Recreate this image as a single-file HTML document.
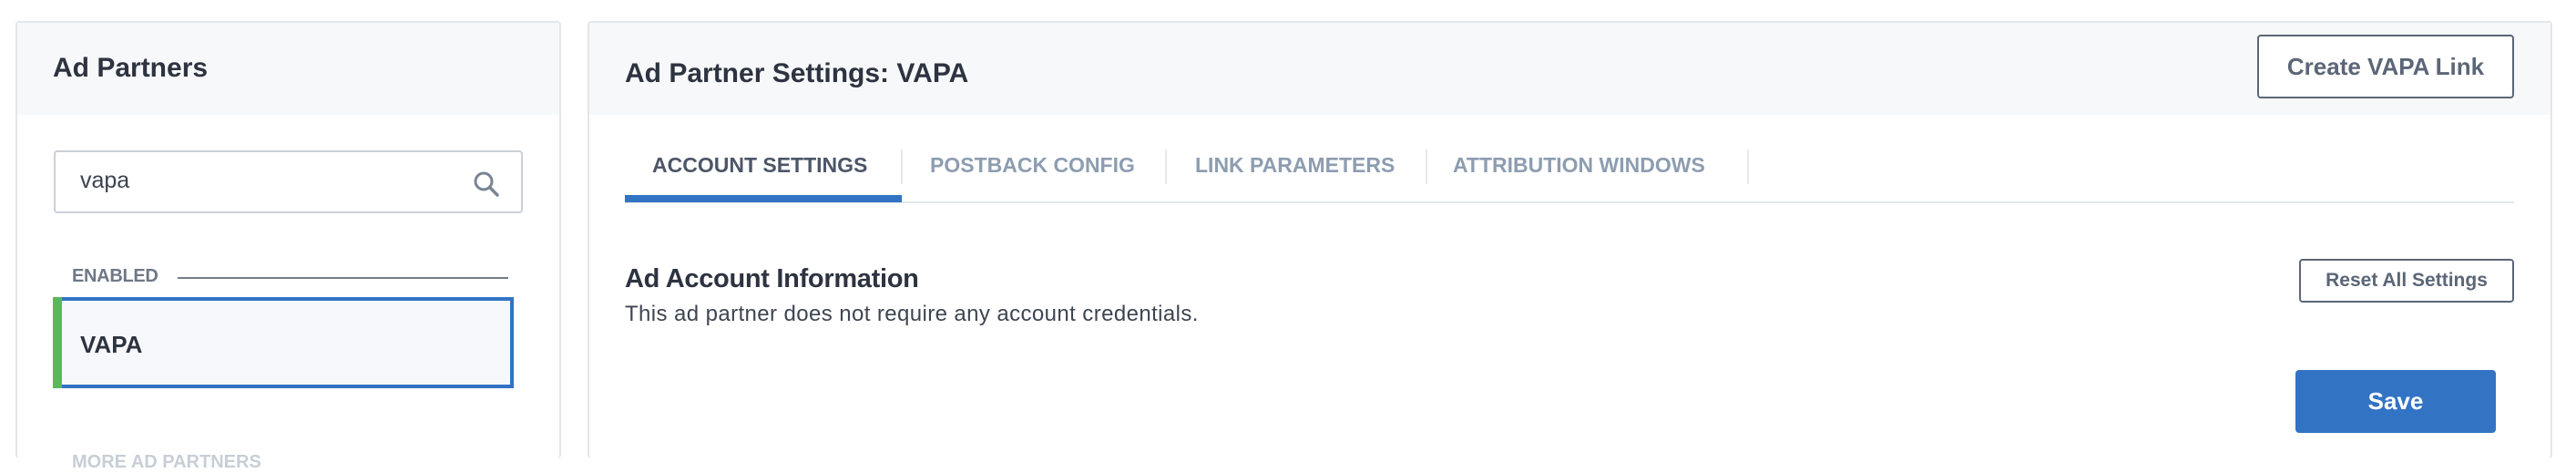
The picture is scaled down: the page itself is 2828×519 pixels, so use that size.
<!DOCTYPE html>
<html><head><style>
*{margin:0;padding:0;box-sizing:border-box}
body{width:2828px;height:500px;background:#fff;font-family:"Liberation Sans",sans-serif;position:relative;overflow:hidden;color:#2d3340}
.a{position:absolute}
.panel{position:absolute;border:2px solid #e3e6ea;border-radius:4px;background:#fff;border-bottom:none}
.hdr{position:absolute;left:0;right:0;top:0;height:101px;background:#f7f8fa}
.tab{position:absolute;top:168px;font-size:23px;font-weight:bold;color:#8d9db1;white-space:nowrap;letter-spacing:0}
.sep{position:absolute;top:164px;width:2px;height:38px;background:#e6e9ed}
.btn{position:absolute;border:2px solid #5b6677;border-radius:4px;color:#5b6677;font-weight:bold;display:flex;align-items:center;justify-content:center;background:#fff}
</style></head><body>
<div class="panel" style="left:17px;top:23px;width:599px;height:480px">
  <div class="hdr"></div>
</div>
<div class="a" style="left:58px;top:58px;font-size:30px;font-weight:bold;color:#2d3340">Ad Partners</div>
<div class="a" style="left:59px;top:165px;width:515px;height:69px;border:2px solid #c9d0d8;border-radius:4px;background:#fff"></div>
<div class="a" style="left:88px;top:184px;font-size:25px;color:#3b4250">vapa</div>
<svg class="a" style="left:519px;top:187px" width="32" height="30" viewBox="0 0 32 30"><circle cx="12" cy="12" r="9" fill="none" stroke="#7a8594" stroke-width="3"/><line x1="18.5" y1="18.5" x2="27" y2="27" stroke="#7a8594" stroke-width="3.5" stroke-linecap="round"/></svg>
<div class="a" style="left:79px;top:292px;font-size:20px;font-weight:bold;color:#6e7886;letter-spacing:-0.3px">ENABLED</div>
<div class="a" style="left:195px;top:304px;width:363px;height:2px;background:#737d89"></div>
<div class="a" style="left:58px;top:326px;width:506px;height:100px;border:4px solid #3273c4;background:#f7f8fb;border-left:none"></div>
<div class="a" style="left:58px;top:326px;width:10px;height:100px;background:#5cb85c"></div>
<div class="a" style="left:88px;top:363px;font-size:26px;font-weight:bold;color:#2d3340">VAPA</div>
<div class="a" style="left:79px;top:496px;font-size:20px;font-weight:bold;color:#c8ced6">MORE AD PARTNERS</div>

<div class="panel" style="left:645px;top:23px;width:2157px;height:480px">
  <div class="hdr"></div>
</div>
<div class="a" style="left:686px;top:64px;font-size:30px;font-weight:bold;color:#2d3340">Ad Partner Settings: VAPA</div>
<div class="btn" style="left:2478px;top:38px;width:282px;height:70px;font-size:26px">Create VAPA Link</div>

<div class="tab" style="left:716px;color:#4c5668">ACCOUNT SETTINGS</div>
<div class="sep" style="left:989px"></div>
<div class="tab" style="left:1021px">POSTBACK CONFIG</div>
<div class="sep" style="left:1279px"></div>
<div class="tab" style="left:1312px">LINK PARAMETERS</div>
<div class="sep" style="left:1565px"></div>
<div class="tab" style="left:1595px">ATTRIBUTION WINDOWS</div>
<div class="sep" style="left:1918px"></div>
<div class="a" style="left:686px;top:221px;width:2074px;height:2px;background:#e3e6ea"></div>
<div class="a" style="left:686px;top:214px;width:304px;height:8px;background:#3273c4"></div>

<div class="a" style="left:686px;top:290px;font-size:29px;font-weight:bold;color:#2d3340;letter-spacing:-0.3px">Ad Account Information</div>
<div class="a" style="left:686px;top:331px;font-size:24px;color:#3e4552;letter-spacing:0.4px">This ad partner does not require any account credentials.</div>
<div class="btn" style="left:2524px;top:284px;width:236px;height:48px;font-size:21px">Reset All Settings</div>
<div class="a" style="left:2520px;top:406px;width:220px;height:69px;background:#3273c4;border-radius:4px;color:#fff;font-weight:bold;font-size:26px;display:flex;align-items:center;justify-content:center">Save</div>
</body></html>
